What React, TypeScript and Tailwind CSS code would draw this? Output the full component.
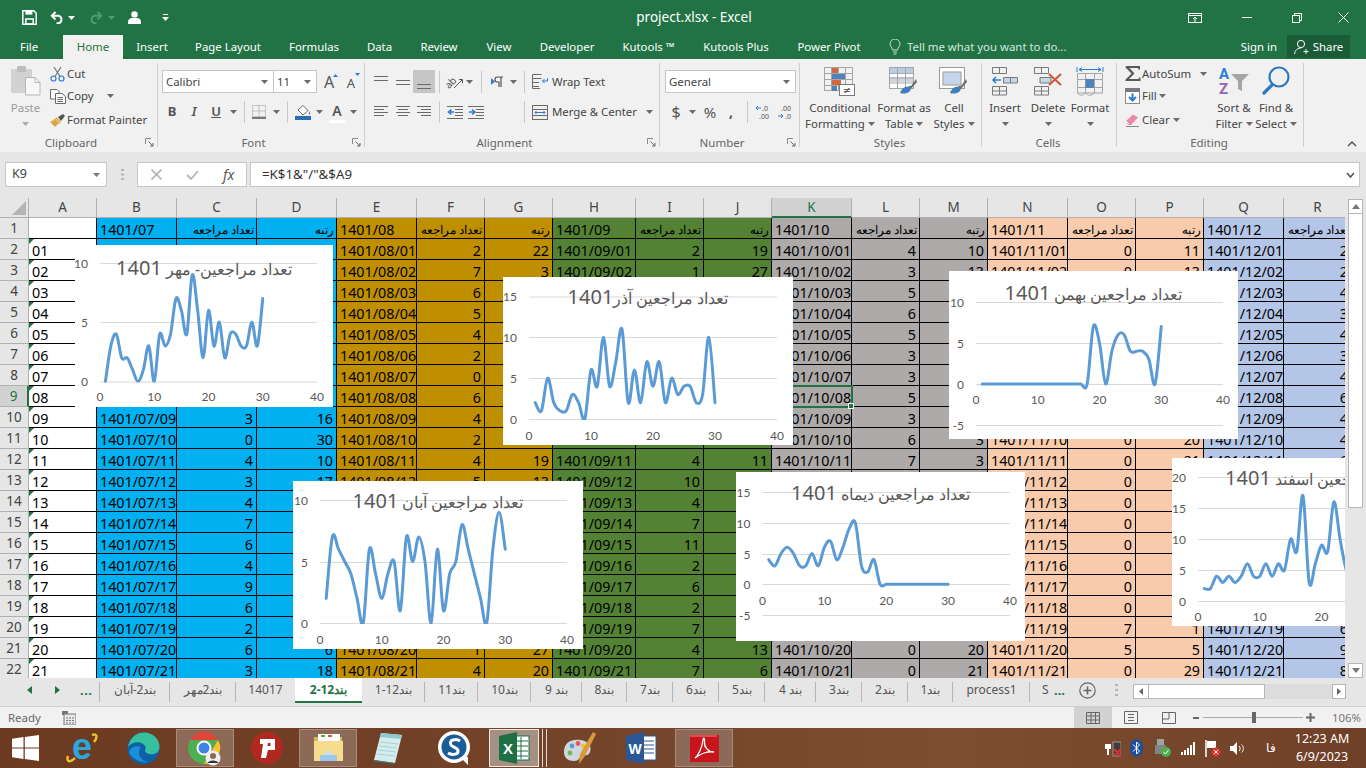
import React, { Fragment } from "react";

const ui = "font-['Noto_Sans','DejaVu_Sans',sans-serif]";
const cellFont = "font-['Lato','DejaVu_Sans',sans-serif]";

/* ---------- data ---------- */
const cMehr = [0,3,4,2,2,1,0,1,3,0,4,3,4,7,6,4,9,6,2,6,3,5,2,4,4,3,3,5,3,7];
const cAban = [2,7,6,5,4,2,0,6,4,2,4,5,1,7,5,7,5,0,6,1,4,5,8,6,4,2,0,6,9,6];
const cAzar = [2,1,5,2,1,1,3,2,0,6,4,10,4,7,11,2,6,2,7,4,7,2,5,3,4,4,2,3,10,2];
const cDey = [4,3,5,6,5,3,3,5,3,6,7,4,6,9,10,3,2,4,0,0,0,0,0,0,0,0,0,0,0,0];
const cBah = [0,0,0,0,0,0,0,0,0,0,0,0,0,0,0,0,0,0,7,5,0,4,6,6,4,4,4,3,0,7];
const cEsf = [2,2,4,3,4,3,4,6,4,4,6,4,6,5,10,8,17,3,6,9,8,16,10,5,3,6,6,8,6,6];

const groups = [
  { m: "07", bg: "bg-[#00b0f0]", counts: cMehr, ranks: [21,14,9,18,19,24,29,25,16,30,10,17,8,2,5,11,1,4,20,6,18] },
  { m: "08", bg: "bg-[#bf8f00]", counts: cAban, ranks: [22,3,6,12,15,23,28,7,16,24,19,13,29,4,11,5,10,30,8,27,20] },
  { m: "09", bg: "bg-[#548235]", counts: cAzar, ranks: [19,27,9,20,28,26,12,21,30,8,11,2,14,5,1,22,7,23,4,13,6] },
  { m: "10", bg: "bg-[#aeaaaa]", counts: cDey, ranks: [10,13,7,5,8,14,15,9,16,3,3,11,4,2,1,17,18,12,19,20,21] },
  { m: "11", bg: "bg-[#f8cbad]", counts: cBah, ranks: [11,13,12,14,15,16,17,18,19,20,21,22,23,24,25,26,27,28,1,5,29] },
  { m: "12", bg: "bg-[#b4c6e7]", counts: cEsf, ranks: [] as number[] },
];
const colLetters = ["A","B","C","D","E","F","G","H","I","J","K","L","M","N","O","P","Q","R"];
const pad = (n: number) => (n < 10 ? "0" + n : "" + n);
const line = "border-r border-b border-black";

/* ---------- small drawings ---------- */
function Caret({ fill = "#6a6a6a" }: { fill?: string }) {
  return (
    <svg width="7" height="4" viewBox="0 0 7 4" className="inline-block shrink-0">
      <polygon points="0,0 7,0 3.5,4" fill={fill} />
    </svg>
  );
}
function Launcher() {
  return (
    <svg width="9" height="9" viewBox="0 0 9 9" className="absolute right-[4px] bottom-[4px]">
      <path d="M0.5 6V0.5H6" fill="none" stroke="#8a8a8a" />
      <path d="M3.5 3.5L8 8M8 5V8H5" fill="none" stroke="#666" />
    </svg>
  );
}
function VSep({ cls }: { cls: string }) {
  return (
    <span className={`flex h-[22px] items-center justify-center ${cls}`}>
      <span className="h-[22px] w-px bg-[#c9c9c9]" />
    </span>
  );
}
function Lines({ ys, cols }: { ys: number[]; cols: [number, number][] }) {
  return (
    <svg width="16" height="18" viewBox="0 0 16 18">
      {ys.map((y, i) => (
        <rect key={i} x={cols[i % cols.length][0]} y={y} width={cols[i % cols.length][1]} height="1" fill="#6a6a6a" />
      ))}
    </svg>
  );
}
function Indent({ inc }: { inc?: boolean }) {
  return (
    <svg width="17" height="14" viewBox="0 0 17 14">
      {[1, 4, 7, 10, 13].map((y, i) => (
        <rect key={y} x={i === 0 || i === 4 ? 0 : 8} y={y} width={i === 0 || i === 4 ? 16 : 8} height="1" fill="#6a6a6a" />
      ))}
      <path d={inc ? "M1 7H6M4 4.5L7 7L4 9.5" : "M7 7H2M4.5 4.5L1.5 7L4.5 9.5"} stroke="#2b7cd3" strokeWidth="1.6" fill="none" />
    </svg>
  );
}

function SaveI() {
  return (
    <svg width="15" height="15" viewBox="0 0 15 15" fill="none" stroke="#fff" strokeWidth="1.5">
      <path d="M.8.8h11l2.4 2.4v11H.8z" />
      <rect x="3.4" y="1" width="7" height="3.6" fill="#fff" stroke="none" />
      <rect x="3.8" y="9" width="7.4" height="5" />
    </svg>
  );
}
function UndoI({ c, flip }: { c: string; flip?: boolean }) {
  return (
    <svg width="14" height="13" viewBox="0 0 14 13" fill="none" stroke={c} strokeWidth="2" className={flip ? "-scale-x-100" : ""}>
      <path d="M5.5 1L1.8 4.8L5.5 8.5" />
      <path d="M2.2 4.8H9a4 4 0 0 1 0 7.4H6.5" />
    </svg>
  );
}
function UserI() {
  return (
    <svg width="13" height="13" viewBox="0 0 13 13" fill="#fff">
      <circle cx="6.5" cy="3.4" r="3.2" />
      <path d="M0 13V10.5C0 8.5 2 7.2 4 7H9C11 7.2 13 8.5 13 10.5V13Z" />
    </svg>
  );
}
function PasteI() {
  return (
    <svg width="30" height="31" viewBox="0 0 30 31">
      <rect x="0" y="4" width="21" height="24" rx="1" fill="#d2d2d2" />
      <rect x="6" y="1" width="9" height="6" rx="1" fill="#bdbdbd" />
      <path d="M14.5 12.5H24L29 17.5V30H14.5Z" fill="#f7f7f7" stroke="#b5b5b5" />
      <path d="M24 12.5V17.5H29" fill="none" stroke="#b5b5b5" />
    </svg>
  );
}
function CutI() {
  return (
    <svg width="15" height="16" viewBox="0 0 15 16" fill="none">
      <path d="M4 1L10 10.5M11 1L5 10.5" stroke="#7b7b7b" strokeWidth="1.3" />
      <circle cx="3.5" cy="12.5" r="2.5" stroke="#2b7cd3" strokeWidth="1.2" />
      <circle cx="11.5" cy="12.5" r="2.5" stroke="#2b7cd3" strokeWidth="1.2" />
    </svg>
  );
}
function CopyI() {
  return (
    <svg width="16" height="15" viewBox="0 0 16 15" fill="#fbfbfb" stroke="#6a6a6a">
      <path d="M.5.5H7L9 2.5V10H.5Z" />
      <path d="M5.5 4.5H12L15.5 7.5V14.5H5.5Z" />
      <path d="M7.5 8.5H13M7.5 10.5H13M7.5 12.5H13" fill="none" />
    </svg>
  );
}
function PainterI() {
  return (
    <svg width="16" height="15" viewBox="0 0 16 15">
      <path d="M0 9L7 4L11 9L5 14Z" fill="#e6b45a" />
      <path d="M2 11L6 8M4 12.5L7 10" stroke="#b98a3a" />
      <path d="M8 4L13 1L15 3L11 8Z" fill="#555" />
    </svg>
  );
}
function FontUp({ up }: { up?: boolean }) {
  return (
    <span className="relative flex w-[22px] justify-center text-[15px] leading-[20px] text-[#555]">
      <span className={up ? "text-[16px]" : "mt-[2px] text-[13px]"}>A</span>
      <svg width="5" height="3" viewBox="0 0 5 3" className="absolute right-[2px] top-[2px]">
        <polygon points={up ? "0,3 5,3 2.5,0" : "0,0 5,0 2.5,3"} fill="#2b7cd3" />
      </svg>
    </span>
  );
}
function BordersI() {
  return (
    <svg width="14" height="14" viewBox="0 0 14 14">
      <rect x=".5" y=".5" width="13" height="11" fill="none" stroke="#9a9a9a" strokeDasharray="1 1" />
      <path d="M7 .5V11.5M.5 6H13.5" stroke="#9a9a9a" strokeDasharray="1 1" />
      <rect x="0" y="12" width="14" height="2" fill="#7a7a7a" />
    </svg>
  );
}
function BucketI() {
  return (
    <svg width="17" height="16" viewBox="0 0 17 16">
      <path d="M3 6L8 1.5L13 6.5L8 11Z" fill="#fff" stroke="#6a6a6a" />
      <path d="M14 7C15 8.5 15.5 9.5 15 10.2S13.5 10 14 7Z" fill="#6a6a6a" />
      <rect x="0" y="12" width="16" height="4" fill="#2b6fb3" />
    </svg>
  );
}
function OrientI() {
  return (
    <svg width="20" height="18" viewBox="0 0 20 18">
      <text x="0" y="13" fontSize="10" fill="#555" transform="rotate(-45 6 10)" fontFamily="Noto Sans">ab</text>
      <path d="M9 15L17 7" stroke="#555" />
      <path d="M14 6.5H17.5V10" fill="none" stroke="#555" />
    </svg>
  );
}
function WrapI() {
  return (
    <svg width="16" height="15" viewBox="0 0 16 15" fill="none" stroke="#6a6a6a">
      <path d="M.5.5H9.5M.5 4.5H9.5M.5 8.5H7M.5 12.5H7M.5.5V14.5H8" />
      <path d="M15.5 4V7H10.5M12.5 5L10.5 7L12.5 9" stroke="#2b7cd3" />
    </svg>
  );
}
function MergeI() {
  return (
    <svg width="16" height="15" viewBox="0 0 16 15" fill="none">
      <rect x=".5" y=".5" width="15" height="14" stroke="#6a6a6a" />
      <path d="M.5 4.5H15.5M.5 10.5H15.5" stroke="#6a6a6a" />
      <path d="M3 7.5H13M4.5 6L3 7.5L4.5 9M11.5 6L13 7.5L11.5 9" stroke="#2b7cd3" />
    </svg>
  );
}
function DecI({ inc }: { inc?: boolean }) {
  return (
    <svg width="17" height="16" viewBox="0 0 17 16" fontSize="7" fill="#555" fontFamily="Noto Sans">
      {inc ? (
        <>
          <path d="M6 4H1M3 2L1 4L3 6" stroke="#2b7cd3" fill="none" />
          <text x="7" y="7">.0</text>
          <text x="4" y="15">.00</text>
        </>
      ) : (
        <>
          <text x="4" y="7">.00</text>
          <path d="M1 12H6M4 10L6 12L4 14" stroke="#2b7cd3" fill="none" />
          <text x="8" y="15">.0</text>
        </>
      )}
    </svg>
  );
}
function CondI() {
  return (
    <svg width="32" height="31" viewBox="0 0 32 31" fill="none">
      <path d="M.5 1.5H28.5V24.5H.5ZM7.5 1.5V24.5M14.5 1.5V24.5M21.5 1.5V24.5M.5 7.5H28.5M.5 13.5H28.5M.5 19.5H28.5" stroke="#a5a5a5" />
      <rect x="8" y="2" width="6" height="5" fill="#d1683f" />
      <rect x="8" y="8" width="13" height="5" fill="#4f81bd" />
      <rect x="8" y="14" width="9" height="5" fill="#d1683f" />
      <rect x="8" y="20" width="5" height="5" fill="#4f81bd" />
      <rect x="15.5" y="18.5" width="15" height="11" fill="#fff" stroke="#7a7a7a" />
      <text x="23" y="28" textAnchor="middle" fontSize="10" fill="#444" fontFamily="DejaVu Sans">≠</text>
    </svg>
  );
}
function Brush() {
  return (
    <>
      <path d="M27 13L22 20C20.5 19.5 19 20.5 19 21.5L22 23L28 16Z" fill="#707070" />
      <path d="M11 27C13 21.5 17 20 20 21C22 22 22 24 21 25C18 28 14 28 11 27Z" fill="#3f7fbf" />
    </>
  );
}
function TableI() {
  return (
    <svg width="30" height="31" viewBox="0 0 30 31" fill="none">
      <rect x=".5" y="1.5" width="24" height="21" fill="#fff" stroke="#a5a5a5" />
      <rect x="1" y="2" width="23" height="5" fill="#b9cde5" />
      <rect x="1" y="11" width="23" height="5" fill="#cfd6de" />
      <path d="M8.5 1.5V22.5M16.5 1.5V22.5M.5 7.5H24.5M.5 12H24.5M.5 17H24.5" stroke="#a5a5a5" />
      <Brush />
    </svg>
  );
}
function StylesI() {
  return (
    <svg width="30" height="31" viewBox="0 0 30 31" fill="none">
      <rect x=".5" y="1.5" width="25" height="21" fill="#fff" stroke="#9a9a9a" />
      <rect x="4" y="6" width="18" height="13" fill="#c6d6ea" stroke="#9a9a9a" />
      <Brush />
    </svg>
  );
}
function InsertI() {
  return (
    <svg width="28" height="30" viewBox="0 0 28 30" fill="none" stroke="#7a7a7a">
      <path d="M1.5 1.5H15.5V7.5H1.5ZM8.5 1.5V7.5" />
      <path d="M1.5 20.5H15.5V29H1.5ZM8.5 20.5V29M1.5 25H15.5" />
      <path d="M12.5 11.5H26.5V17H12.5ZM19.5 11.5V17" fill="#c6d6ea" />
      <path d="M10 14H2M5 11L2 14L5 17" stroke="#2b7cd3" strokeWidth="1.5" />
    </svg>
  );
}
function DeleteI() {
  return (
    <svg width="30" height="30" viewBox="0 0 30 30" fill="none" stroke="#7a7a7a">
      <path d="M1.5 1.5H15.5V7.5H1.5ZM8.5 1.5V7.5" />
      <path d="M1.5 20.5H15.5V29H1.5ZM8.5 20.5V29M1.5 25H15.5" />
      <path d="M7 11.5H18V17H7Z" fill="#c6d6ea" />
      <path d="M16 8L28 19M28 8L16 19" stroke="#d1563a" strokeWidth="2" />
    </svg>
  );
}
function FormatI() {
  return (
    <svg width="28" height="31" viewBox="0 0 28 31" fill="none">
      <path d="M1 1V6M27 1V6M3 3.5H25M6 1.5L3 3.5L6 5.5M22 1.5L25 3.5L22 5.5" stroke="#2b7cd3" />
      <path d="M1.5 7.5H26.5V27H1.5ZM9.5 7.5V27M18.5 7.5V27M1.5 13.5H26.5M1.5 21.5H26.5" stroke="#a5a5a5" />
      <rect x="9.5" y="13" width="8.5" height="9" fill="#4f81bd" />
      <path d="M1.5 27C4 30 7 30 9.5 27C12 30 15 30 18.5 27" stroke="#a5a5a5" />
    </svg>
  );
}
function SigmaI() {
  return (
    <svg width="16" height="15" viewBox="0 0 16 15">
      <path d="M1 0H15V3.5H13.5L13 2H4.5L9.5 7.5L4 13H13.5L14 11.5H15.5V15H.5V13.5L6.5 7.5L.5 1.5Z" fill="#5a5a5a" />
    </svg>
  );
}
function FillI() {
  return (
    <svg width="15" height="16" viewBox="0 0 15 16">
      <rect x=".5" y=".5" width="14" height="15" fill="#fff" stroke="#8a8a8a" />
      <rect x="0" y="0" width="15" height="4" fill="#7a7a7a" />
      <path d="M7.5 5.5V12.5M4 9L7.5 12.5L11 9" stroke="#2b7cd3" strokeWidth="2" fill="none" />
    </svg>
  );
}
function ClearI() {
  return (
    <svg width="15" height="14" viewBox="0 0 15 14">
      <path d="M1 8L8 1.5L13 4.5L6 12H3Z" fill="#e88aa6" />
      <path d="M1 8L4 11" stroke="#fff" />
      <rect x="1" y="13" width="13" height="1" fill="#8a8a8a" />
    </svg>
  );
}
function SortI() {
  return (
    <svg width="31" height="30" viewBox="0 0 31 30">
      <text x="0" y="13" fontSize="15" fontWeight="700" fill="#2b7cd3" fontFamily="Roboto">A</text>
      <text x="0" y="28" fontSize="15" fontWeight="700" fill="#9a5fb8" fontFamily="Roboto">Z</text>
      <path d="M12 8H30L23 15V25L19 23V15Z" fill="#a5a5a5" />
    </svg>
  );
}
function FindI() {
  return (
    <svg width="29" height="29" viewBox="0 0 29 29" fill="none">
      <circle cx="17" cy="11" r="9.5" stroke="#2f78c4" strokeWidth="2.2" />
      <path d="M10 19L2 27" stroke="#2f78c4" strokeWidth="3.2" strokeLinecap="round" />
    </svg>
  );
}

/* ---------- ribbon helpers ---------- */
function Group({ cls, label, launcher, children }: { cls: string; label: string; launcher?: boolean; children: React.ReactNode }) {
  return (
    <div className={`relative h-[88px] shrink-0 ${cls}`}>
      <div className="h-[72px]">{children}</div>
      <div className={`h-[16px] text-center text-[11.5px] leading-[16px] text-[#666] ${launcher ? "pr-[16px]" : "pr-[3px]"}`}>{label}</div>
      {launcher && <Launcher />}
      <span className="absolute right-0 top-0 h-[84px] w-px bg-[#cfcfcf]" />
    </div>
  );
}
function Big({ cls, icon, l1, l2, caret }: { cls: string; icon: React.ReactNode; l1: string; l2?: string; caret?: boolean }) {
  return (
    <div className={`flex shrink-0 flex-col items-center text-center text-[11.4px] leading-[16px] text-[#444] ${cls}`}>
      <div className="flex h-[37px] items-start justify-center pt-[3px]">{icon}</div>
      <div className="whitespace-nowrap">{l1}</div>
      <div className="flex h-[16px] items-center justify-center gap-[3px] whitespace-nowrap">
        {l2 && <span>{l2}</span>}
        {caret && <Caret />}
      </div>
    </div>
  );
}
function SmallRow({ cls, icon, text, after }: { cls: string; icon: React.ReactNode; text: string; after?: React.ReactNode }) {
  return (
    <div className={`flex items-center text-[11.4px] text-[#444] ${cls}`}>
      <span className="flex w-[19px] shrink-0 justify-center">{icon}</span>
      <span className="whitespace-nowrap">{text}</span>
      {after}
    </div>
  );
}

function Ribbon() {
  return (
    <div className={`flex h-[93px] items-start bg-[#f1f1f1] pt-[4px] ${ui}`}>
      {/* Clipboard */}
      <Group cls="w-[158px]" label="Clipboard" launcher>
        <div className="flex">
          <div className="ml-[10px] flex w-[31px] flex-col items-center text-[11.4px] leading-[16px] text-[#999]">
            <div className="h-[37px] pt-[2px]"><PasteI /></div>
            <div className="whitespace-nowrap">Paste</div>
            <div className="flex h-[16px] items-center"><Caret fill="#aaa" /></div>
          </div>
          <div className="ml-[7px]">
            <SmallRow cls="h-[21px]" icon={<CutI />} text="Cut" />
            <SmallRow cls="h-[24px]" icon={<CopyI />} text="Copy" after={<span className="ml-[13px] flex"><Caret /></span>} />
            <SmallRow cls="h-[24px]" icon={<PainterI />} text="Format Painter" />
          </div>
        </div>
      </Group>

      {/* Font */}
      <Group cls="w-[207px]" label="Font" launcher>
        <div className="pl-[4px] pt-[7px]">
          <div className="flex h-[23px] items-center">
            <div className="flex h-[23px] w-[112px] items-center justify-between border border-[#c6c6c6] bg-white pl-[3px] pr-[5px] text-[11.4px] text-[#444]">
              Calibri <Caret />
            </div>
            <div className="ml-[-1px] flex h-[23px] w-[44px] items-center justify-between border border-[#c6c6c6] bg-white pl-[3px] pr-[5px] text-[11.4px] text-[#444]">
              11 <Caret />
            </div>
            <span className="ml-[1px]"><FontUp up /></span>
            <FontUp />
          </div>
          <div className="-ml-[4px] mt-[8px] flex h-[22px] items-center text-[#555]">
            <span className="ml-[3px] w-[22px] text-center text-[13px] font-bold">B</span>
            <span className="w-[22px] text-center text-[13px] italic font-semibold">I</span>
            <span className="w-[22px] text-center text-[13px] font-semibold underline">U</span>
            <span className="flex w-[12px] justify-center"><Caret /></span>
            <VSep cls="w-[10px]" />
            <span className="flex w-[20px] justify-center"><BordersI /></span>
            <span className="flex w-[14px] justify-center"><Caret /></span>
            <VSep cls="w-[8px]" />
            <span className="flex w-[24px] justify-center"><BucketI /></span>
            <span className="flex w-[8px] justify-center"><Caret /></span>
            <span className="relative ml-[2px] flex h-[22px] w-[24px] justify-center text-[14px] font-semibold leading-[20px]">
              A
              <span className="absolute bottom-[0px] left-[4px] h-[3px] w-[16px] bg-white" />
            </span>
            <span className="flex w-[8px] justify-center"><Caret /></span>
          </div>
        </div>
      </Group>

      {/* Alignment */}
      <Group cls="w-[295px]" label="Alignment" launcher>
        <div className="pl-[5px] pt-[7px]">
          <div className="flex h-[23px] items-center">
            <span className="flex w-[22px] justify-center"><Lines ys={[3, 7]} cols={[[1, 14]]} /></span>
            <span className="flex w-[21px] justify-center"><Lines ys={[7, 11]} cols={[[1, 14]]} /></span>
            <span className="flex h-[23px] w-[22px] items-center justify-center bg-[#c6c6c6]"><Lines ys={[11, 15]} cols={[[1, 14]]} /></span>
            <VSep cls="w-[8px]" />
            <span className="ml-[2px] flex w-[20px] justify-center"><OrientI /></span>
            <span className="flex w-[9px] justify-center"><Caret /></span>
            <VSep cls="w-[14px]" />
            <span className="flex w-[18px] justify-center">
              <svg width="13" height="11" viewBox="0 0 13 11"><polygon points="0,2 0,9 4,5.5" fill="#2b7cd3" /><path d="M10 1H6.5a2.5 2.5 0 0 0 0 5H8V11M10 1V11M12 1H8" fill="none" stroke="#555" strokeWidth="1.2" /></svg>
            </span>
            <span className="flex w-[14px] justify-center"><Caret /></span>
            <VSep cls="w-[8px]" />
            <span className="ml-[4px]"><WrapI /></span>
            <span className="ml-[4px] whitespace-nowrap text-[11.4px] text-[#444]">Wrap Text</span>
          </div>
          <div className="mt-[8px] flex h-[22px] items-center">
            <span className="flex w-[22px] justify-center"><Lines ys={[3, 6, 9, 12]} cols={[[1, 14], [1, 10]]} /></span>
            <span className="flex w-[21px] justify-center"><Lines ys={[3, 6, 9, 12]} cols={[[1, 14], [3, 10]]} /></span>
            <span className="flex w-[22px] justify-center"><Lines ys={[3, 6, 9, 12]} cols={[[1, 14], [5, 10]]} /></span>
            <VSep cls="w-[8px]" />
            <span className="ml-[2px] flex w-[21px] justify-center"><Indent /></span>
            <span className="flex w-[21px] justify-center"><Indent inc /></span>
            <span className="w-[33px]" />
            <VSep cls="w-[8px]" />
            <span className="ml-[4px]"><MergeI /></span>
            <span className="ml-[4px] whitespace-nowrap text-[11.4px] text-[#444]">Merge &amp; Center</span>
            <span className="ml-[9px] flex"><Caret /></span>
          </div>
        </div>
      </Group>

      {/* Number */}
      <Group cls="w-[140px]" label="Number" launcher>
        <div className="pl-[5px] pt-[7px]">
          <div className="flex h-[23px] w-[131px] items-center justify-between border border-[#c6c6c6] bg-white pl-[3px] pr-[5px] text-[11.4px] text-[#444]">
            General <Caret />
          </div>
          <div className="mt-[8px] flex h-[22px] items-center text-[#555]">
            <span className="w-[22px] text-center text-[16px] leading-none">$</span>
            <span className="flex w-[10px] justify-center"><Caret /></span>
            <span className="ml-[2px] w-[22px] text-center text-[15px] leading-none">%</span>
            <span className="w-[20px] text-center text-[14px] font-bold leading-none">,</span>
            <VSep cls="w-[12px]" />
            <span className="flex w-[20px] justify-center"><DecI inc /></span>
            <span className="ml-[2px] flex w-[20px] justify-center"><DecI /></span>
          </div>
        </div>
      </Group>

      {/* Styles */}
      <Group cls="w-[182px]" label="Styles">
        <div className="flex pl-[4px]">
          <Big cls="w-[72px]" icon={<CondI />} l1="Conditional" l2="Formatting" caret />
          <Big cls="w-[56px]" icon={<TableI />} l1="Format as" l2="Table" caret />
          <Big cls="w-[44px]" icon={<StylesI />} l1="Cell" l2="Styles" caret />
        </div>
      </Group>

      {/* Cells */}
      <Group cls="w-[135px]" label="Cells">
        <div className="flex pl-[1px]">
          <Big cls="w-[44px]" icon={<InsertI />} l1="Insert" caret />
          <Big cls="w-[42px]" icon={<DeleteI />} l1="Delete" caret />
          <Big cls="w-[42px]" icon={<FormatI />} l1="Format" caret />
        </div>
      </Group>

      {/* Editing */}
      <Group cls="w-[187px]" label="Editing">
        <div className="flex">
          <div className="w-[96px] pl-[6px]">
            <SmallRow cls="h-[21px]" icon={<SigmaI />} text="AutoSum" after={<span className="ml-[9px] flex"><Caret /></span>} />
            <SmallRow cls="h-[24px]" icon={<FillI />} text="Fill" after={<span className="ml-[2px] flex"><Caret /></span>} />
            <SmallRow cls="h-[24px]" icon={<ClearI />} text="Clear" after={<span className="ml-[3px] flex"><Caret /></span>} />
          </div>
          <Big cls="w-[42px]" icon={<SortI />} l1="Sort &" l2="Filter" caret />
          <Big cls="w-[42px]" icon={<FindI />} l1="Find &" l2="Select" caret />
        </div>
      </Group>

      <div className="flex h-[88px] flex-1 items-end justify-end pb-[4px] pr-[9px]">
        <svg width="10" height="6" viewBox="0 0 10 6" fill="none" stroke="#555" strokeWidth="1.5">
          <path d="M1 5L5 1L9 5" />
        </svg>
      </div>
    </div>
  );
}

/* ---------- grid ---------- */
function Cell({ cls, children }: { cls: string; children?: React.ReactNode }) {
  return <div className={`relative overflow-hidden whitespace-nowrap pt-[2px] leading-[19px] ${line} ${cls}`}>{children}</div>;
}
const ar = "text-[12px] text-right pr-[2px]";

function Sheet() {
  return (
    <div className={`relative h-[480px] w-[1345px] shrink-0 overflow-hidden text-[14.3px] text-black ${cellFont}`}>
      <div className="grid grid-cols-[29px_68px_80px_80px_80px_80px_68px_68px_83px_68px_68px_80px_68px_68px_80px_68px_68px_80px_68px] grid-rows-[20px_repeat(22,21px)]">
        <div className="relative border-r border-b border-[#b0b0b0] bg-[#e6e6e6]">
          <svg width="14" height="14" viewBox="0 0 14 14" className="absolute bottom-[2px] right-[2px]">
            <polygon points="14,0 14,14 0,14" fill="#b4b4b4" />
          </svg>
        </div>
        {colLetters.map((l) => (
          <div
            key={l}
            className={
              l === "K"
                ? `border-r border-b-2 border-r-[#b0b0b0] border-b-[#217346] bg-[#d2d2d2] text-center text-[13.5px] leading-[19px] text-[#217346] ${ui}`
                : `border-r border-b border-[#b0b0b0] bg-[#e6e6e6] text-center text-[13.5px] leading-[19px] text-[#444] ${ui}`
            }
          >
            {l}
          </div>
        ))}
        {Array.from({ length: 22 }, (_, i) => {
          const r = i + 1;
          const sel = r === 9;
          return (
            <Fragment key={r}>
              <div
                className={
                  sel
                    ? `border-r-2 border-b border-r-[#217346] border-b-[#b0b0b0] bg-[#d2d2d2] text-center text-[13.5px] leading-[21px] text-[#217346] ${ui}`
                    : `border-r border-b border-[#b0b0b0] bg-[#e6e6e6] text-center text-[13.5px] leading-[21px] text-[#444] ${ui}`
                }
              >
                {r}
              </div>
              <Cell cls="bg-white pl-[3px]">
                {r > 1 && pad(r - 1)}
                {r > 1 && <span className="absolute left-0 top-0 border-r-[5px] border-t-[5px] border-r-transparent border-t-[#217346]" />}
              </Cell>
              {groups.map((g, gi) => (
                <Fragment key={g.m}>
                  <Cell cls={`pl-[3px] ${g.bg}`}>{r === 1 ? `1401/${g.m}` : `1401/${g.m}/${pad(r - 1)}`}</Cell>
                  {r === 1 ? (
                    <Cell cls={`${ar} ${g.bg}`}>تعداد مراجعه</Cell>
                  ) : (
                    <Cell cls={`pr-[3px] text-right ${g.bg}`}>{g.counts[r - 2]}</Cell>
                  )}
                  {gi < 5 &&
                    (r === 1 ? (
                      <Cell cls={`${ar} ${g.bg}`}>رتبه</Cell>
                    ) : (
                      <Cell cls={`pr-[3px] text-right ${g.bg}`}>{g.ranks[r - 2]}</Cell>
                    ))}
                </Fragment>
              ))}
            </Fragment>
          );
        })}
      </div>

      {/* active cell */}
      <div className="absolute left-[771px] top-[187px] h-[23px] w-[82px] border-2 border-[#217346]">
        <span className="absolute -bottom-[3px] -right-[3px] h-[6px] w-[6px] border border-white bg-[#217346]" />
      </div>

      <Chart id="c1" cls="left-[75px] top-[47px] h-[162px] w-[258px]" L={75} T={245} W={258} H={162} x0={100} x40={317}
        ticks={[[10, 263], [5, 322], [0, 381.5]]} xLabY={401} data={cMehr} clip titleTop="top-[8px]" title="تعداد مراجعین- مهر " />
      <Chart id="c2" cls="left-[503px] top-[79px] h-[168px] w-[290px]" L={503} T={277} W={290} H={168} x0={529} x40={777}
        ticks={[[15, 296.5], [10, 337], [5, 378], [0, 419]]} xLabY={440} data={cAzar} clip titleTop="top-[5px]" title="تعداد مراجعین آذر" />
      <Chart id="c3" cls="left-[949px] top-[73px] h-[168px] w-[289px]" L={949} T={271} W={289} H={168} x0={976} x40={1223}
        ticks={[[10, 302], [5, 343], [0, 384], [-5, 425]]} xLabY={404} data={cBah} titleTop="top-[7px]" title="تعداد مراجعین بهمن " />
      <Chart id="c4" cls="left-[293px] top-[283px] h-[168px] w-[290px]" L={293} T={481} W={290} H={168} x0={320} x40={567}
        ticks={[[10, 500], [5, 562], [0, 623]]} xLabY={644} data={cAban} clip titleTop="top-[5px]" title="تعداد مراجعین آبان " />
      <Chart id="c5" cls="left-[736px] top-[274px] h-[169px] w-[289px]" L={736} T={472} W={289} H={169} x0={762.5} x40={1010}
        ticks={[[15, 492], [10, 523], [5, 554], [0, 584], [-5, 615]]} xLabY={605} data={cDey} titleTop="top-[6px]" title="تعداد مراجعین دیماه " />
      <Chart id="c6" cls="left-[1172px] top-[260px] h-[168px] w-[290px]" L={1172} T={458} W={290} H={168} x0={1198} x40={1445}
        ticks={[[20, 477], [15, 508], [10, 539], [5, 570], [0, 601]]} xLabY={621} data={cEsf} clip titleTop="top-[5px]" title="تعداد مراجعین اسفند " />
    </div>
  );
}

function Chart({ id, cls, L, T, W, H, x0, x40, ticks, xLabY, data, clip, title, titleTop }: {
  id: string; cls: string; L: number; T: number; W: number; H: number; x0: number; x40: number;
  ticks: [number, number][]; xLabY: number; data: number[]; clip?: boolean; title: string; titleTop: string;
}) {
  const [v0, y0] = ticks[0];
  const [v1, y1] = ticks[ticks.length - 1];
  const fy = (v: number) => y0 + ((v - v0) * (y1 - y0)) / (v1 - v0) - T;
  const fx = (v: number) => x0 + ((x40 - x0) * v) / 40 - L;
  const pts = data.map((v, i) => [fx(i + 1), fy(v)]);
  let d = `M${pts[0][0]} ${pts[0][1]}`;
  for (let i = 0; i < pts.length - 1; i++) {
    const p0 = pts[i - 1] || pts[i];
    const p1 = pts[i];
    const p2 = pts[i + 1];
    const p3 = pts[i + 2] || p2;
    d += `C${p1[0] + (p2[0] - p0[0]) / 6} ${p1[1] + (p2[1] - p0[1]) / 6} ${p2[0] - (p3[0] - p1[0]) / 6} ${p2[1] - (p3[1] - p1[1]) / 6} ${p2[0]} ${p2[1]}`;
  }
  const font = "Lato, sans-serif";
  return (
    <div className={`absolute bg-white ${cls}`}>
      <svg width={W} height={H} viewBox={`0 0 ${W} ${H}`} className="absolute inset-0">
        <defs>
          <clipPath id={id}>
            <rect x="0" y="0" width={W} height={clip ? fy(0) + 1 : H} />
          </clipPath>
        </defs>
        {ticks.map(([v, y]) => (
          <Fragment key={v}>
            <line x1={x0 - L} x2={x40 - L} y1={y - T + 0.5} y2={y - T + 0.5} stroke="#d9d9d9" />
            <text x={x0 - L - 12} y={y - T + 4.5} textAnchor="end" fontSize="12" fill="#595959" fontFamily={font}>{v}</text>
          </Fragment>
        ))}
        {[0, 10, 20, 30, 40].map((v) => (
          <text key={v} x={fx(v)} y={xLabY - T} textAnchor="middle" fontSize="12" fill="#595959" fontFamily={font}>{v}</text>
        ))}
        <path d={d} fill="none" stroke="#5b9bd5" strokeWidth="3" strokeLinecap="round" strokeLinejoin="round" clipPath={`url(#${id})`} />
      </svg>
      <div dir="rtl" className={`absolute inset-x-0 whitespace-nowrap text-center font-['Liberation_Sans','DejaVu_Sans',sans-serif] text-[#595959] ${titleTop}`}>
        <span className="text-[15.5px]">{title}</span>
        <span className="text-[20px]">1401</span>
      </div>
    </div>
  );
}

/* ---------- sheet tabs ---------- */
const tabs: [string, string][] = [
  ["بند2-آبان", "w-[70px]"], ["بند2مهر", "w-[66px]"], ["14017", "w-[59px]"], ["بند12-2", "w-[67px]"],
  ["بند12-1", "w-[63px]"], ["بند11", "w-[53px]"], ["بند10", "w-[53px]"], ["بند 9", "w-[51px]"],
  ["بند8", "w-[45px]"], ["بند7", "w-[46px]"], ["بند6", "w-[46px]"], ["بند5", "w-[46px]"],
  ["بند 4", "w-[51px]"], ["بند3", "w-[46px]"], ["بند2", "w-[46px]"], ["بند1", "w-[45px]"], ["process1", "w-[77px]"],
];
function TabSep() {
  return <span className="absolute right-0 top-[4px] h-[20px] w-px bg-[#b5b5b5]" />;
}
function TabsBar() {
  return (
    <div className={`flex h-[28px] items-start bg-[#e6e6e6] ${ui}`}>
      <div className="relative flex h-[24px] w-[100px] items-center">
        <svg width="5" height="8" viewBox="0 0 5 8" className="ml-[27px]"><polygon points="5,0 5,8 0,4" fill="#217346" /></svg>
        <svg width="5" height="8" viewBox="0 0 5 8" className="ml-[23px]"><polygon points="0,0 0,8 5,4" fill="#217346" /></svg>
        <span className="ml-[20px] text-[13px] font-bold leading-none tracking-[0.5px] text-[#217346]">...</span>
        <TabSep />
      </div>
      {tabs.map(([t, w], i) =>
        i === 3 ? (
          <div key={t} className={`flex h-[25px] shrink-0 items-center justify-center border-b-[2px] border-[#217346] bg-white text-[12px] font-bold text-[#217346] ${w}`}>
            {t}
          </div>
        ) : (
          <div key={t} className={`relative flex h-[24px] shrink-0 items-center justify-center text-[12px] text-[#555] ${w}`}>
            {t}
            {i !== 2 && <TabSep />}
          </div>
        )
      )}
      <div className="h-[24px] w-[22px] overflow-hidden pl-[12px] text-[12px] leading-[24px] text-[#555]">S</div>
      <div className="flex h-[24px] w-[22px] items-center pl-[2px] text-[13px] font-bold leading-none text-[#217346]">...</div>
      <div className="flex h-[24px] w-[26px] items-center justify-center">
        <svg width="17" height="17" viewBox="0 0 17 17" fill="none" stroke="#666">
          <circle cx="8.5" cy="8.5" r="7.7" strokeWidth="1.2" />
          <path d="M4.5 8.5H12.5M8.5 4.5V12.5" strokeWidth="1.6" />
        </svg>
      </div>
      <div className="flex h-[24px] w-[33px] items-center justify-center text-[#aaa]">
        <svg width="3" height="13" viewBox="0 0 3 13" fill="#b5b5b5"><rect y="0" width="3" height="2" /><rect y="5" width="3" height="2" /><rect y="10" width="3" height="2" /></svg>
      </div>
      <div className="mt-[6px] flex h-[15px] w-[213px] items-stretch">
        <div className="flex w-[16px] items-center justify-center border border-[#b5b5b5] bg-white">
          <svg width="4" height="7" viewBox="0 0 4 7"><polygon points="4,0 4,7 0,3.5" fill="#666" /></svg>
        </div>
        <div className="w-[116px] border-y border-r border-[#b5b5b5] bg-white" />
        <div className="flex-1 bg-[#dcdcdc]" />
        <div className="flex w-[14px] items-center justify-center border border-[#b5b5b5] bg-white">
          <svg width="4" height="7" viewBox="0 0 4 7"><polygon points="0,0 0,7 4,3.5" fill="#666" /></svg>
        </div>
      </div>
    </div>
  );
}

/* ---------- taskbar icons ---------- */
function WinI() {
  return (
    <svg width="27" height="26" viewBox="0 0 27 26" fill="#fff">
      <path d="M0 3.7L11.5 2.1V12.4H0ZM12.8 1.9L27 0V12.4H12.8ZM0 13.6H11.5V23.9L0 22.3ZM12.8 13.6H27V26L12.8 24.1Z" />
    </svg>
  );
}
function IeI() {
  return (
    <svg width="32" height="32" viewBox="0 0 32 32">
      <text x="16" y="27" textAnchor="middle" fontSize="36" fontWeight="700" fontFamily="Liberation Sans" fill="#2aa7e0">e</text>
      <path d="M26 3C31 1 32 5 28 10M9 26C4 31 0 30 2 24" fill="none" stroke="#f2c12e" strokeWidth="2.4" />
    </svg>
  );
}
function EdgeI() {
  return (
    <svg width="33" height="33" viewBox="0 0 33 33">
      <circle cx="16.5" cy="16.5" r="16" fill="#0f5ea8" />
      <path d="M1 15C3 5 10 .5 17 .5C26 .5 32.5 7 32.5 15C32.5 21 27 23 22 22C18 21 17 18 19 16C17 9 6 8 1 15Z" fill="#35c1a0" />
      <path d="M2 21C6 27 13 31 22 30C14 29 9 22 14 15C8 13 3 15 2 21Z" fill="#1b8fd8" />
    </svg>
  );
}
function ChromeI() {
  return (
    <svg width="34" height="36" viewBox="0 0 34 36">
      <circle cx="16" cy="18" r="16" fill="#4caf50" />
      <path d="M2.1 10A16 16 0 0 1 30 10H16Z" fill="#e0443a" />
      <path d="M30 10A16 16 0 0 1 16 34L23 22Z" fill="#fbc02d" />
      <circle cx="16" cy="18" r="7.5" fill="#fff" />
      <circle cx="16" cy="18" r="5.5" fill="#3f83e6" />
      <circle cx="25" cy="28" r="7.5" fill="#eee" />
      <circle cx="25" cy="26" r="3" fill="#8a6a55" />
      <path d="M19.5 33C20.5 29.5 29.5 29.5 30.5 33Z" fill="#333" />
    </svg>
  );
}
function PsiI() {
  return (
    <svg width="32" height="32" viewBox="0 0 32 32">
      <circle cx="16" cy="16" r="16" fill="#b1281e" />
      <path d="M9 7H24V18H17L15 26H10L12 12H9ZM17 11L16.4 14H19.5V11Z" fill="#fff" />
    </svg>
  );
}
function FolderI() {
  return (
    <svg width="31" height="30" viewBox="0 0 31 30">
      <path d="M1 4H29V27H1Z" fill="#d9b45f" />
      <rect x="5" y="1" width="22" height="8" fill="#fff" />
      <rect x="8" y="2" width="4" height="2" fill="#5aa84a" />
      <rect x="15" y="2" width="4" height="2" fill="#d9534f" />
      <path d="M1 8H30V28H1Z" fill="#f6dc8c" />
      <path d="M7 28V22H24V28Z" fill="#9cc7ec" />
      <path d="M11 22L15.5 17L20 22Z" fill="#bfe0f7" />
    </svg>
  );
}
function NotepadI() {
  return (
    <svg width="30" height="32" viewBox="0 0 30 32">
      <path d="M8 1L29 3L22 31L1 28Z" fill="#d5ecec" />
      <path d="M8 1L29 3L28 7L7 5Z" fill="#8fc8cf" />
      <path d="M1 28L22 31L21 32L0 29Z" fill="#3f7a85" />
      <path d="M7 10L25 12M6 14L24 16M5 18L23 20M4 22L22 24" stroke="#a8d2d6" />
    </svg>
  );
}
function SkypeI() {
  return (
    <svg width="32" height="34" viewBox="0 0 32 34">
      <circle cx="16" cy="16" r="16" fill="#fff" />
      <circle cx="16" cy="16" r="12.5" fill="#1a5c96" />
      <path d="M22 10C18 7 10 9 13 14C15 17 21 16 20 21C19 24 13 24 10 22" fill="none" stroke="#fff" strokeWidth="3" />
      <path d="M22 26L30 34L30 26Z" fill="#fff" />
    </svg>
  );
}
function ExcelI() {
  return (
    <svg width="31" height="32" viewBox="0 0 31 32">
      <rect x="15" y="4" width="15" height="24" fill="#fff" stroke="#1d7044" />
      <path d="M16 9H29M16 14H29M16 19H29M16 24H29M22 5V27" stroke="#1d7044" />
      <path d="M0 4L18 0V32L0 28Z" fill="#1d7044" />
      <text x="9" y="22" textAnchor="middle" fontSize="15" fontWeight="700" fill="#fff" fontFamily="Liberation Sans">X</text>
    </svg>
  );
}
function PaintI() {
  return (
    <svg width="32" height="32" viewBox="0 0 32 32">
      <path d="M0 20C0 10 8 7 16 8C25 9 28 15 26 20C24 25 20 22 17 24C15 26 15 29 10 29C4 29 0 26 0 20Z" fill="#cfd8dc" />
      <circle cx="8" cy="14" r="2.4" fill="#5b9bd5" />
      <circle cx="14" cy="11.5" r="2.4" fill="#e05b5b" />
      <circle cx="6" cy="21" r="2.4" fill="#71b84f" />
      <circle cx="19" cy="14" r="2.2" fill="#f2c12e" />
      <path d="M29 0L32 2L21 24L15 32L16 22Z" fill="#d99a3c" />
    </svg>
  );
}
function WordI() {
  return (
    <svg width="31" height="32" viewBox="0 0 31 32">
      <rect x="15" y="4" width="15" height="24" fill="#fff" stroke="#2b5797" />
      <path d="M18 9H28M18 13H28M18 17H28M18 21H28" stroke="#2b5797" />
      <path d="M0 4L18 0V32L0 28Z" fill="#2b5797" />
      <text x="9" y="22" textAnchor="middle" fontSize="14" fontWeight="700" fill="#fff" fontFamily="Liberation Sans">W</text>
    </svg>
  );
}
function AcroI() {
  return (
    <svg width="30" height="29" viewBox="0 0 30 29">
      <rect x="1" y="1" width="29" height="27" fill="#c8151b" />
      <path d="M1 1H28V3H1Z" fill="#e64a4a" />
      <path d="M6 24C9 22 13 14 14 6C14.5 3 16 4 15.5 8C15 13 19 18 25 18C20 17 12 19 6 24Z" fill="none" stroke="#fff" strokeWidth="1.3" />
    </svg>
  );
}

function Task({ cls, children, on, strong }: { cls: string; children: React.ReactNode; on?: boolean; strong?: boolean }) {
  const s = strong
    ? "border border-[#f0e9e4] bg-[#a59184]"
    : on
    ? "border border-[#a48c7e] bg-[#8c6a57]"
    : "";
  return <div className={`flex h-[38px] shrink-0 items-center justify-center ${s} ${cls}`}>{children}</div>;
}

function Taskbar() {
  return (
    <div className={`flex h-[40px] items-center bg-[linear-gradient(90deg,#6c3a20,#73432a_40%,#7e4e30_70%,#6f4028)] ${ui}`}>
      <Task cls="w-[51px]"><WinI /></Task>
      <Task cls="w-[61px]"><IeI /></Task>
      <Task cls="w-[63px]"><EdgeI /></Task>
      <Task cls="ml-[1px] w-[58px]" on><ChromeI /></Task>
      <Task cls="ml-[1px] w-[64px]"><PsiI /></Task>
      <Task cls="w-[58px]" on><FolderI /></Task>
      <Task cls="ml-[1px] w-[60px]"><NotepadI /></Task>
      <Task cls="ml-[4px] w-[63px]"><SkypeI /></Task>
      <Task cls="ml-[4px] w-[50px]" strong><ExcelI /></Task>
      <span className="h-[38px] w-[4px] border-r border-[#e0d6cf]" />
      <span className="h-[38px] w-[4px] border-r border-[#e0d6cf]" />
      <Task cls="w-[65px]"><PaintI /></Task>
      <Task cls="w-[58px]"><WordI /></Task>
      <Task cls="ml-[5px] w-[58px]" on><AcroI /></Task>

      <div className="ml-auto flex items-center text-white">
        <svg width="16" height="18" viewBox="0 0 16 18" className="mr-[9px]">
          <path d="M1 1V5M5 1V5M0 5H6V10H4V16H2V10H0Z" fill="#fff" />
          <rect x="8" y="3" width="8" height="14" fill="#3d3d3d" stroke="#999" />
          <path d="M9 10L16 17M16 10L9 17" stroke="#e03030" strokeWidth="2" />
        </svg>
        <svg width="13" height="18" viewBox="0 0 13 18" className="mr-[11px]">
          <ellipse cx="6.5" cy="9" rx="6.5" ry="9" fill="#1b4f9c" />
          <path d="M3 5.5L9.5 12L6.5 15V3L9.5 6L3 12.5" fill="none" stroke="#fff" />
        </svg>
        <svg width="17" height="18" viewBox="0 0 17 18" className="mr-[10px]">
          <rect x="3" y="0" width="7" height="7" fill="#9ca3a3" />
          <rect x="1" y="6" width="11" height="9" fill="#7d8585" />
          <circle cx="12" cy="13" r="5" fill="#4caf50" />
          <path d="M9.5 13L11.5 15L14.5 11" fill="none" stroke="#fff" />
        </svg>
        <svg width="15" height="13" viewBox="0 0 15 13" fill="#fff" className="mr-[9px]">
          <rect x="0" y="10" width="2" height="3" /><rect x="3" y="8" width="2" height="5" /><rect x="6" y="6" width="2" height="7" /><rect x="9" y="3" width="2" height="10" /><rect x="12" y="0" width="2" height="13" />
        </svg>
        <svg width="16" height="17" viewBox="0 0 16 17" className="mr-[9px]">
          <path d="M1 0V17" stroke="#fff" strokeWidth="1.5" />
          <path d="M2 1H11V8H2Z" fill="#fff" />
          <circle cx="11" cy="12" r="4.5" fill="#e03030" />
          <path d="M9 10L13 14M13 10L9 14" stroke="#fff" />
        </svg>
        <svg width="15" height="13" viewBox="0 0 15 13" className="mr-[21px]">
          <path d="M0 4H3L7 0V13L3 9H0Z" fill="#fff" />
          <path d="M9 4C10.5 5 10.5 8 9 9M11.5 2.5C14 4.5 14 8.5 11.5 10.5" fill="none" stroke="#fff" />
        </svg>
        <span className="mr-[22px] font-['DejaVu_Sans',sans-serif] text-[12px]">فا</span>
        <div className="mr-[20px] flex w-[48px] flex-col items-center whitespace-nowrap font-['Roboto',sans-serif] text-[12.5px] leading-[18px]">
          <span>12:23 AM</span>
          <span>6/9/2023</span>
        </div>
      </div>
    </div>
  );
}

const tabNames: [string, string][] = [
  ["Insert", "w-[58px]"], ["Page Layout", "w-[94px]"], ["Formulas", "w-[78px]"], ["Data", "w-[53px]"],
  ["Review", "w-[66px]"], ["View", "w-[54px]"], ["Developer", "w-[82px]"], ["Kutools ™", "w-[81px]"],
  ["Kutools Plus", "w-[94px]"], ["Power Pivot", "w-[92px]"],
];

export default function App() {
  return (
    <div className="flex h-[768px] w-[1366px] flex-col overflow-hidden bg-[#e6e6e6]">
      {/* title bar */}
      <div className={`flex h-[35px] items-center bg-[#217346] text-white ${ui}`}>
        <div className="flex flex-1 items-center pl-[22px]">
          <SaveI />
          <span className="ml-[13px]"><UndoI c="#fff" /></span>
          <span className="ml-[4px] flex"><Caret fill="#fff" /></span>
          <span className="ml-[14px]"><UndoI c="#4f9a74" flip /></span>
          <span className="ml-[5px] flex"><Caret fill="#4f9a74" /></span>
          <span className="ml-[13px]"><UserI /></span>
          <span className="ml-[21px] flex flex-col items-center gap-[2px]">
            <span className="h-px w-[5px] bg-white" />
            <Caret fill="#fff" />
          </span>
        </div>
        <div className="w-[130px] whitespace-nowrap text-center text-[13.5px]">project.xlsx - Excel</div>
        <div className="flex flex-1 items-center justify-end">
          <svg width="14" height="10" viewBox="0 0 14 10" fill="none" stroke="#fff" className="mr-[40px]">
            <rect x=".5" y=".5" width="13" height="9" />
            <path d="M.5 2.5H13.5M7 9V4M5 6L7 4L9 6" />
          </svg>
          <span className="mr-[40px] h-px w-[10px] bg-white" />
          <svg width="10" height="10" viewBox="0 0 10 10" fill="none" stroke="#fff" className="mr-[36px]">
            <rect x=".5" y="2.5" width="7" height="7" />
            <path d="M2.5 2.5V.5H9.5V7.5H7.5" />
          </svg>
          <svg width="11" height="11" viewBox="0 0 11 11" stroke="#fff" className="mr-[17px]">
            <path d="M.5.5L10.5 10.5M10.5.5L.5 10.5" />
          </svg>
        </div>
      </div>

      {/* tabs */}
      <div className={`flex h-[24px] items-stretch bg-[#217346] text-[11.4px] leading-[24px] text-white ${ui}`}>
        <div className="w-[63px] pl-[20px]">File</div>
        <div className="w-[60px] bg-[#f1f1f1] text-center text-[#217346]">Home</div>
        {tabNames.map(([t, w]) => (
          <div key={t} className={`whitespace-nowrap text-center ${w}`}>{t}</div>
        ))}
        <svg width="12" height="16" viewBox="0 0 12 16" fill="none" stroke="#bfe0cf" className="ml-[14px] mt-[4px]">
          <path d="M3.5 11C3 8 1 7.5 1 5A5 5 0 0 1 11 5C11 7.5 9 8 8.5 11ZM4 13H8M4.5 15H7.5" />
        </svg>
        <div className="ml-[6px] whitespace-nowrap text-[#d5e8de]">Tell me what you want to do...</div>
        <div className="ml-auto whitespace-nowrap">Sign in</div>
        <div className="ml-[10px] mr-[16px] flex h-[23px] w-[63px] items-center justify-center gap-[4px] bg-[#1a5c38]">
          <svg width="15" height="16" viewBox="0 0 15 16" fill="none" stroke="#fff">
            <circle cx="7" cy="5" r="3.6" />
            <path d="M.5 15C1 11 4 9 7 9M9.5 12.5H14.5M12 10V15" />
          </svg>
          Share
        </div>
      </div>

      <Ribbon />

      {/* formula bar */}
      <div className={`flex h-[46px] items-start bg-[#e6e6e6] pl-[5px] pt-[10px] ${ui}`}>
        <div className="flex h-[25px] w-[102px] items-center justify-between border border-[#c6c6c6] bg-white pl-[6px] pr-[6px] text-[12.5px] text-[#444]">
          K9 <Caret fill="#777" />
        </div>
        <div className="flex h-[25px] w-[30px] items-center justify-center">
          <svg width="3" height="11" viewBox="0 0 3 11" fill="#b5b5b5"><rect width="3" height="2" /><rect y="4.5" width="3" height="2" /><rect y="9" width="3" height="2" /></svg>
        </div>
        <div className="flex h-[25px] w-[110px] items-center border border-[#c6c6c6] bg-white text-[#b5b5b5]">
          <svg width="11" height="11" viewBox="0 0 11 11" stroke="#b5b5b5" strokeWidth="1.6" className="ml-[13px]"><path d="M.5.5L10.5 10.5M10.5.5L.5 10.5" /></svg>
          <svg width="13" height="10" viewBox="0 0 13 10" fill="none" stroke="#b5b5b5" strokeWidth="1.8" className="ml-[24px]"><path d="M1 5L5 9L12 1" /></svg>
          <span className="ml-[24px] font-['Liberation_Serif',serif] text-[14px] italic text-[#555]">fx</span>
        </div>
        <div className="ml-[3px] flex h-[25px] w-[1110px] items-center justify-between border border-[#c6c6c6] bg-white pl-[11px] pr-[4px] text-[13.3px] text-[#333]">
          {'=K$1&"/"&$A9'}
          <svg width="9" height="6" viewBox="0 0 9 6" fill="none" stroke="#555" strokeWidth="1.6"><path d="M1 1L4.5 5L8 1" /></svg>
        </div>
      </div>

      {/* sheet with vertical bar */}
      <div className="flex h-[480px] items-stretch bg-[#e6e6e6]">
        <Sheet />
        <div className="ml-[3px] flex w-[15px] flex-col">
          <div className="mt-[1px] flex h-[15px] items-center justify-center border border-[#b5b5b5] bg-white">
            <svg width="8" height="5" viewBox="0 0 8 5"><polygon points="0,5 8,5 4,0" fill="#777" /></svg>
          </div>
          <div className="h-[294px] border-x border-b border-[#b5b5b5] bg-white" />
          <div className="flex-1" />
          <div className="flex h-[15px] items-center justify-center border border-[#b5b5b5] bg-white">
            <svg width="8" height="5" viewBox="0 0 8 5"><polygon points="0,0 8,0 4,5" fill="#777" /></svg>
          </div>
        </div>
      </div>

      <TabsBar />

      {/* status bar */}
      <div className={`flex h-[22px] items-center border-t border-[#cfcfcf] bg-[#f1f1f1] text-[11.4px] text-[#666] ${ui}`}>
        <span className="ml-[8px]">Ready</span>
        <svg width="14" height="14" viewBox="0 0 14 14" className="ml-[21px]">
          <rect x="0" y="0" width="6" height="4" fill="#777" />
          <rect x="2" y="3" width="12" height="11" fill="#e8e8e8" stroke="#777" />
          <path d="M4 7H12M4 9.5H12M4 12H12" stroke="#777" strokeDasharray="2 1" />
        </svg>
        <div className="ml-auto flex h-[21px] w-[292px] items-center">
          <span className="flex h-[21px] w-[38px] items-center justify-center bg-[#d2d2d2]">
            <svg width="14" height="12" viewBox="0 0 14 12" fill="none" stroke="#666"><path d="M.5.5H13.5V11.5H.5ZM5 .5V11.5M9.5 .5V11.5M.5 4H13.5M.5 8H13.5" /></svg>
          </span>
          <span className="flex h-[21px] w-[38px] items-center justify-center">
            <svg width="14" height="13" viewBox="0 0 14 13" fill="none" stroke="#666"><path d="M.5.5H13.5V12.5H.5ZM4 3.5H10M4 6.5H10M4 9.5H10" /></svg>
          </span>
          <span className="flex h-[21px] w-[38px] items-center justify-center">
            <svg width="14" height="12" viewBox="0 0 14 12" fill="none" stroke="#666"><path d="M.5.5H13.5V11.5H.5ZM7 .5V7H.5" /></svg>
          </span>
          <span className="ml-[5px] h-[2px] w-[6px] bg-[#666]" />
          <span className="relative ml-[4px] h-px w-[100px] bg-[#aaa]">
            <span className="absolute left-[49px] top-[-5px] h-[11px] w-[4px] bg-[#666]" />
          </span>
          <svg width="9" height="9" viewBox="0 0 9 9" stroke="#666" strokeWidth="2" className="ml-[3px]"><path d="M0 4.5H9M4.5 0V9" /></svg>
          <span className="ml-[17px] w-[32px] text-[#777]">106%</span>
        </div>
      </div>

      <Taskbar />
    </div>
  );
}
